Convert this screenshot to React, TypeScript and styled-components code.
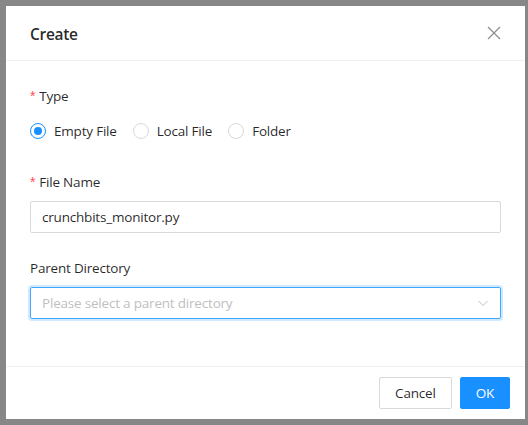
import React from 'react';
import styled, { createGlobalStyle } from 'styled-components';

const GlobalStyle = createGlobalStyle`
  html, body {
    margin: 0;
    padding: 0;
    background: #878787;
  }
  body {
    font-family: "Open Sans", "Noto Sans", sans-serif;
    font-size: 13.5px;
    letter-spacing: -0.2px;
    color: rgba(0, 0, 0, 0.85);
  }
  * { box-sizing: border-box; }
`;

const Backdrop = styled.div`
  width: 528px;
  height: 425px;
  padding: 6px 3px 6px 6px;
`;

const Modal = styled.div`
  width: 519px;
  height: 413px;
  background: #fff;
  display: flex;
  flex-direction: column;
`;

const Header = styled.div`
  display: flex;
  align-items: center;
  justify-content: space-between;
  padding: 16px 24px;
  border-bottom: 1px solid #f0f0f0;
  height: 55px;
`;

const Title = styled.div`
  font-size: 15.5px;
  font-weight: 600;
  line-height: 22px;
  letter-spacing: -0.3px;
  margin-top: 1px;
  color: rgba(0, 0, 0, 0.85);
`;

const CloseButton = styled.button`
  border: 0;
  background: none;
  padding: 0;
  margin-right: -1px;
  width: 16px;
  height: 16px;
  display: flex;
  cursor: pointer;
`;

const Body = styled.div`
  flex: 1;
  padding: 24px 24px 0;
`;

const FormItem = styled.div`
  margin-bottom: 24px;
`;

const Label = styled.div`
  line-height: 22px;
  padding-bottom: 8px;
  display: flex;
  align-items: center;
`;

const Required = styled.span`
  color: #ff4d4f;
  font-family: SimSun, "Liberation Sans", sans-serif;
  font-size: 14px;
  margin-right: 4px;
  line-height: 1;
`;

const RadioGroup = styled.div`
  display: flex;
  align-items: center;
  height: 32px;
`;

const RadioWrapper = styled.label`
  display: flex;
  align-items: center;
  margin-right: 8px;
  cursor: pointer;
`;

const RadioCircle = styled.span<{ $checked?: boolean }>`
  width: 16px;
  height: 16px;
  border-radius: 50%;
  border: 1px solid ${p => (p.$checked ? '#1890ff' : '#d9d9d9')};
  display: flex;
  align-items: center;
  justify-content: center;
  &::after {
    content: '';
    width: 8px;
    height: 8px;
    border-radius: 50%;
    background: #1890ff;
    display: ${p => (p.$checked ? 'block' : 'none')};
  }
`;

const RadioText = styled.span`
  padding: 0 8px;
  line-height: 22px;
`;

const Field = styled.div<{ $focused?: boolean }>`
  height: 32px;
  border: 1px solid ${p => (p.$focused ? '#40a9ff' : '#d9d9d9')};
  box-shadow: ${p => (p.$focused ? '0 0 0 2px rgba(24, 144, 255, 0.2)' : 'none')};
  border-radius: 2px;
  padding: 4px 11px;
  display: flex;
  align-items: center;
  justify-content: space-between;
  line-height: 22px;
`;

const Value = styled.span`
  color: rgba(0, 0, 0, 0.85);
`;

const Placeholder = styled.span`
  color: #bfbfbf;
`;

const Footer = styled.div`
  border-top: 1px solid #f0f0f0;
  padding: 10px 15px 10px 16px;
  display: flex;
  justify-content: flex-end;
  gap: 8px;
`;

const Button = styled.button<{ $primary?: boolean }>`
  height: 32px;
  padding: 4px 15px;
  font-family: inherit;
  font-size: 13.5px;
  letter-spacing: -0.2px;
  line-height: 22px;
  border-radius: 2px;
  border: 1px solid ${p => (p.$primary ? '#1890ff' : '#d9d9d9')};
  background: ${p => (p.$primary ? '#1890ff' : '#fff')};
  color: ${p => (p.$primary ? '#fff' : 'rgba(0, 0, 0, 0.85)')};
  cursor: pointer;
`;

const CloseIcon = () => (
  <svg width="16" height="16" viewBox="0 0 16 16">
    <path d="M2 2L14 14M14 2L2 14" stroke="rgba(0,0,0,0.45)" strokeWidth="1.2" fill="none" />
  </svg>
);

const ChevronDown = () => (
  <svg width="12" height="12" viewBox="0 0 12 12">
    <path d="M1.5 4L6 8.5L10.5 4" stroke="#bfbfbf" strokeWidth="1" fill="none" />
  </svg>
);

const options = ['Empty File', 'Local File', 'Folder'];

export default function App() {
  return (
    <>
      <GlobalStyle />
      <Backdrop>
        <Modal>
          <Header>
            <Title>Create</Title>
            <CloseButton aria-label="Close">
              <CloseIcon />
            </CloseButton>
          </Header>
          <Body>
            <FormItem>
              <Label>
                <Required>*</Required>Type
              </Label>
              <RadioGroup>
                {options.map((o, i) => (
                  <RadioWrapper key={o}>
                    <RadioCircle $checked={i === 0} />
                    <RadioText>{o}</RadioText>
                  </RadioWrapper>
                ))}
              </RadioGroup>
            </FormItem>
            <FormItem>
              <Label>
                <Required>*</Required>File Name
              </Label>
              <Field>
                <Value>crunchbits_monitor.py</Value>
              </Field>
            </FormItem>
            <FormItem>
              <Label>Parent Directory</Label>
              <Field $focused>
                <Placeholder>Please select a parent directory</Placeholder>
                <ChevronDown />
              </Field>
            </FormItem>
          </Body>
          <Footer>
            <Button>Cancel</Button>
            <Button $primary>OK</Button>
          </Footer>
        </Modal>
      </Backdrop>
    </>
  );
}
